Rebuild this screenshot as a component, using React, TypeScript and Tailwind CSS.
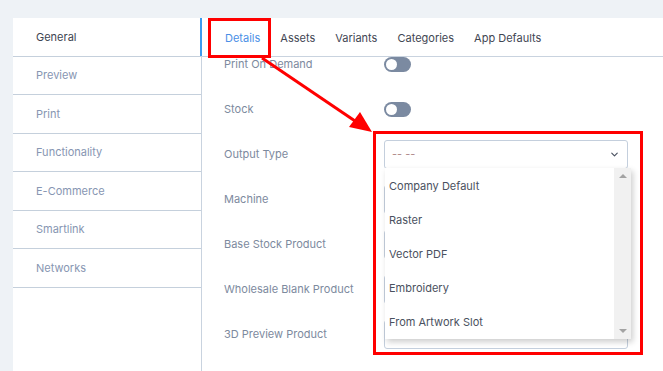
import { ChevronDown } from "lucide-react";

const menu = ["General", "Preview", "Print", "Functionality", "E-Commerce", "Smartlink", "Networks"];
const tabs = ["Details", "Assets", "Variants", "Categories", "App Defaults"];
const options = ["Company Default", "Raster", "Vector PDF", "Embroidery", "From Artwork Slot"];

function Toggle() {
  return (
    <div className="flex h-[15px] w-[27px] items-center rounded-full bg-[#7b8aa1] px-[2px]">
      <div className="h-[11px] w-[11px] rounded-full bg-white" />
    </div>
  );
}

function SelectBox({ placeholder }: { placeholder?: string }) {
  return (
    <div className="flex h-[29px] w-[244px] items-center justify-between rounded-[3px] border border-[#c4cfdd] bg-white pl-[7px] pr-[7px]">
      <span className="text-[11px] text-[#b08a8a]">{placeholder}</span>
      <ChevronDown size={11} strokeWidth={2.5} className="text-[#4a5160]" />
    </div>
  );
}

export default function App() {
  const rows: { label: string; field: "toggle" | "select" }[] = [
    { label: "Print On Demand", field: "toggle" },
    { label: "Stock", field: "toggle" },
    { label: "Output Type", field: "select" },
    { label: "Machine", field: "select" },
    { label: "Base Stock Product", field: "select" },
    { label: "Wholesale Blank Product", field: "select" },
    { label: "3D Preview Product", field: "select" },
  ];

  return (
    <div
      className="relative h-[371px] w-[663px] overflow-hidden bg-[#eef2f6] pl-[13px] pt-[18px]"
      style={{ fontFamily: "Inter, 'Noto Sans', sans-serif" }}
    >
      <div className="flex h-full">
        {/* sidebar */}
        <div className="relative h-full w-[189px] border-r border-[#c9d3df] bg-white">
          {menu.map((item, i) => (
            <div
              key={item}
              className={`flex h-[38.5px] items-center border-b border-[#c5d0dc] pl-[23px] text-[11px] ${
                i === 0 ? "text-[#3d4451]" : "text-[#8796b2]"
              }`}
            >
              {item}
            </div>
          ))}
          <div className="absolute right-[-1px] top-0 h-[38px] w-[2px] bg-[#3b9cf0]" />
        </div>

        {/* main */}
        <div className="flex h-full flex-1 flex-col bg-white">
          <div className="flex h-[39px] shrink-0 items-stretch gap-[20px] border-b border-[#c9d3df] pl-[23px] pt-[2px]">
            {tabs.map((t, i) => (
              <div
                key={t}
                className={`relative flex items-center text-[11px] ${
                  i === 0 ? "text-[#4a8fe6]" : "text-[#3f4653]"
                }`}
              >
                {t}
                {i === 0 && (
                  <div className="absolute bottom-[-1px] left-0 right-0 h-[2px] bg-[#3b9cf0]" />
                )}
              </div>
            ))}
          </div>

          <div className="relative flex-1 overflow-hidden">
            <div className="-mt-[15px] pl-[22px]">
              {rows.map((r) => (
                <div key={r.label} className="flex h-[45px] items-center">
                  <div className="w-[160px] text-[11px] text-[#7d8a9e]">{r.label}</div>
                  {r.field === "toggle" && <Toggle />}
                  {r.field === "select" && (
                    <SelectBox placeholder={r.label === "Output Type" ? "-- --" : ""} />
                  )}
                </div>
              ))}
            </div>

            {/* open dropdown */}
            <div className="absolute left-[183px] top-[111px] flex h-[171px] w-[246px] bg-white shadow-[2px_3px_6px_rgba(0,0,0,0.2)]">
              <div className="flex-1 pt-[1px]">
                {options.map((o) => (
                  <div key={o} className="flex h-[34px] items-center pl-[4px] text-[11px] text-[#4a5160]">
                    {o}
                  </div>
                ))}
              </div>
              <div className="flex w-[17px] flex-col items-center justify-between bg-[#f1f1f1] py-[6px]">
                <div className="h-0 w-0 border-x-[4px] border-b-[4px] border-x-transparent border-b-[#a3a3a3]" />
                <div className="h-0 w-0 border-x-[4px] border-t-[4px] border-x-transparent border-t-[#a3a3a3]" />
              </div>
            </div>
          </div>
        </div>
      </div>

      {/* annotations */}
      <div className="absolute left-[208px] top-[18px] h-[40px] w-[63px] border-[3px] border-[#ff0000]" />
      <div className="absolute left-[373px] top-[131px] h-[224px] w-[270px] border-[3px] border-[#ff0000]" />
      <svg className="absolute left-0 top-0" width="663" height="371">
        <line x1="262" y1="58" x2="358" y2="123" stroke="#ff0000" strokeWidth="3" />
        <polygon points="372,132 349,127 360,112" fill="#ff0000" />
      </svg>
    </div>
  );
}
